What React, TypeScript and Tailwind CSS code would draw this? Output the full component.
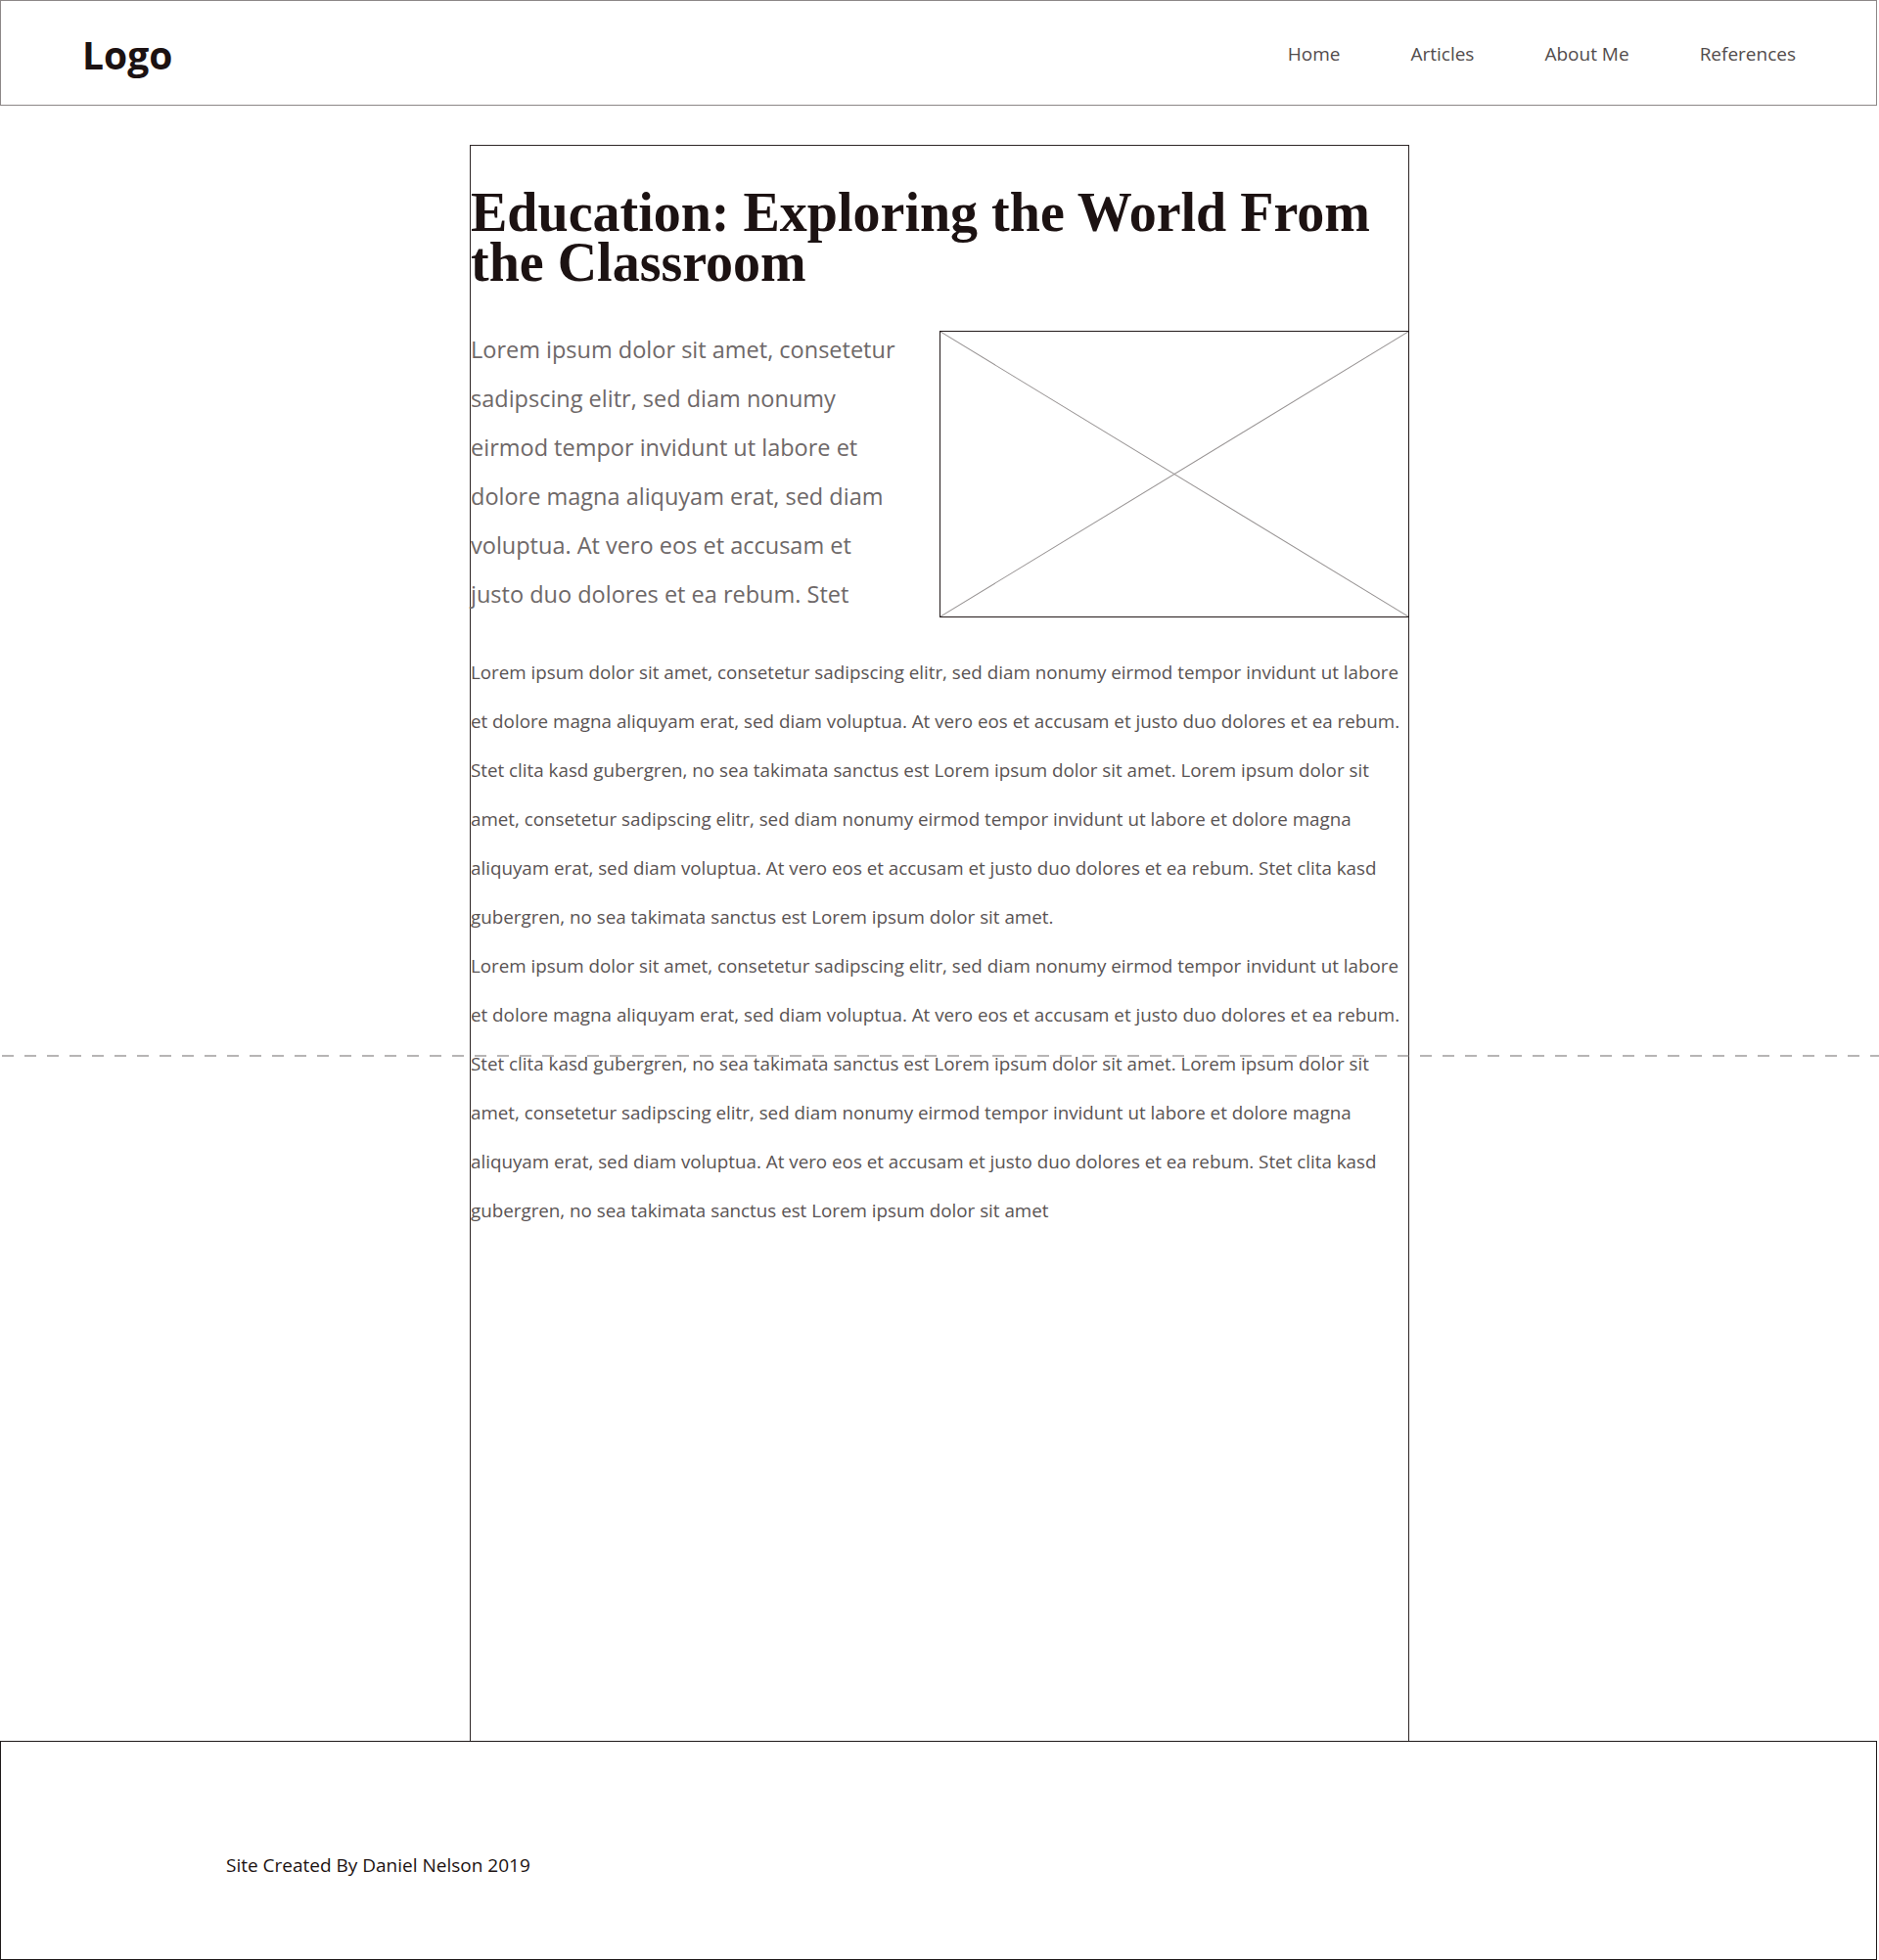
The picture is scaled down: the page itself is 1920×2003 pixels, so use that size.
import React from "react";

const intro =
  "Lorem ipsum dolor sit amet, consetetur sadipscing elitr, sed diam nonumy eirmod tempor invidunt ut labore et dolore magna aliquyam erat, sed diam voluptua. At vero eos et accusam et justo duo dolores et ea rebum. Stet";

const para1 =
  "Lorem ipsum dolor sit amet, consetetur sadipscing elitr, sed diam nonumy eirmod tempor invidunt ut labore et dolore magna aliquyam erat, sed diam voluptua. At vero eos et accusam et justo duo dolores et ea rebum. Stet clita kasd gubergren, no sea takimata sanctus est Lorem ipsum dolor sit amet. Lorem ipsum dolor sit amet, consetetur sadipscing elitr, sed diam nonumy eirmod tempor invidunt ut labore et dolore magna aliquyam erat, sed diam voluptua. At vero eos et accusam et justo duo dolores et ea rebum. Stet clita kasd gubergren, no sea takimata sanctus est Lorem ipsum dolor sit amet.";

const para2 =
  "Lorem ipsum dolor sit amet, consetetur sadipscing elitr, sed diam nonumy eirmod tempor invidunt ut labore et dolore magna aliquyam erat, sed diam voluptua. At vero eos et accusam et justo duo dolores et ea rebum. Stet clita kasd gubergren, no sea takimata sanctus est Lorem ipsum dolor sit amet. Lorem ipsum dolor sit amet, consetetur sadipscing elitr, sed diam nonumy eirmod tempor invidunt ut labore et dolore magna aliquyam erat, sed diam voluptua. At vero eos et accusam et justo duo dolores et ea rebum. Stet clita kasd gubergren, no sea takimata sanctus est Lorem ipsum dolor sit amet";

const sans = { fontFamily: '"Open Sans", "Noto Sans", sans-serif' };

export default function App() {
  return (
    <div className="relative w-[1920px] h-[2003px] bg-white overflow-hidden" style={sans}>
      {/* Header */}
      <header className="w-[1918px] h-[108px] border border-[#8c8787] flex items-start pl-[83px] pr-[82px] box-border">
        <div className="mt-[28px] text-[39px] leading-[53px] font-bold text-[#1c1212]">Logo</div>
        <nav className="ml-auto mt-[41px] flex gap-[72px] text-[19px] leading-[26px] text-[#524c4c]">
          <span>Home</span>
          <span>Articles</span>
          <span>About Me</span>
          <span>References</span>
        </nav>
      </header>

      {/* Main content box */}
      <main className="mt-[40px] ml-[480px] w-[960px] h-[1631px] border-t border-x border-[#2e2626] box-border">
        <h1
          className="mt-[43px] text-[56px] leading-[51px] font-bold text-[#1c1212]"
          style={{ fontFamily: '"Liberation Serif", "Times New Roman", serif' }}
        >
          Education: Exploring the World From the Classroom
        </h1>

        <div className="mt-[38px] flex items-start">
          <p className="w-[442px] text-[23.5px] leading-[50px] text-[#6e6868]">{intro}</p>
          <div className="ml-auto mr-[-1px] mt-[6px] w-[480px] h-[293px] border border-[#231a1a] box-border">
            <svg width="100%" height="100%" viewBox="0 0 100 100" preserveAspectRatio="none" className="block">
              <line x1="0" y1="0" x2="100" y2="100" stroke="#969292" strokeWidth="1" vectorEffect="non-scaling-stroke" />
              <line x1="0" y1="100" x2="100" y2="0" stroke="#969292" strokeWidth="1" vectorEffect="non-scaling-stroke" />
            </svg>
          </div>
        </div>

        <div className="mt-[30px] text-[18.8px] leading-[50px] text-[#595353]">
          <p>{para1}</p>
          <p>{para2}</p>
        </div>
      </main>

      {/* Footer */}
      <footer className="w-[1918px] h-[224px] border border-[#1f1a1a] box-border pl-[230px] pt-[113px]">
        <p className="text-[19px] leading-[26px] text-[#1c1212]">Site Created By Daniel Nelson 2019</p>
      </footer>

      {/* Fold line */}
      <svg className="absolute left-0 top-[1078px] pointer-events-none" width="1920" height="2">
        <line x1="0" y1="1" x2="1920" y2="1" stroke="#6e6a6a" strokeWidth="1" strokeDasharray="12 11" strokeDashoffset="-2" />
      </svg>
    </div>
  );
}
